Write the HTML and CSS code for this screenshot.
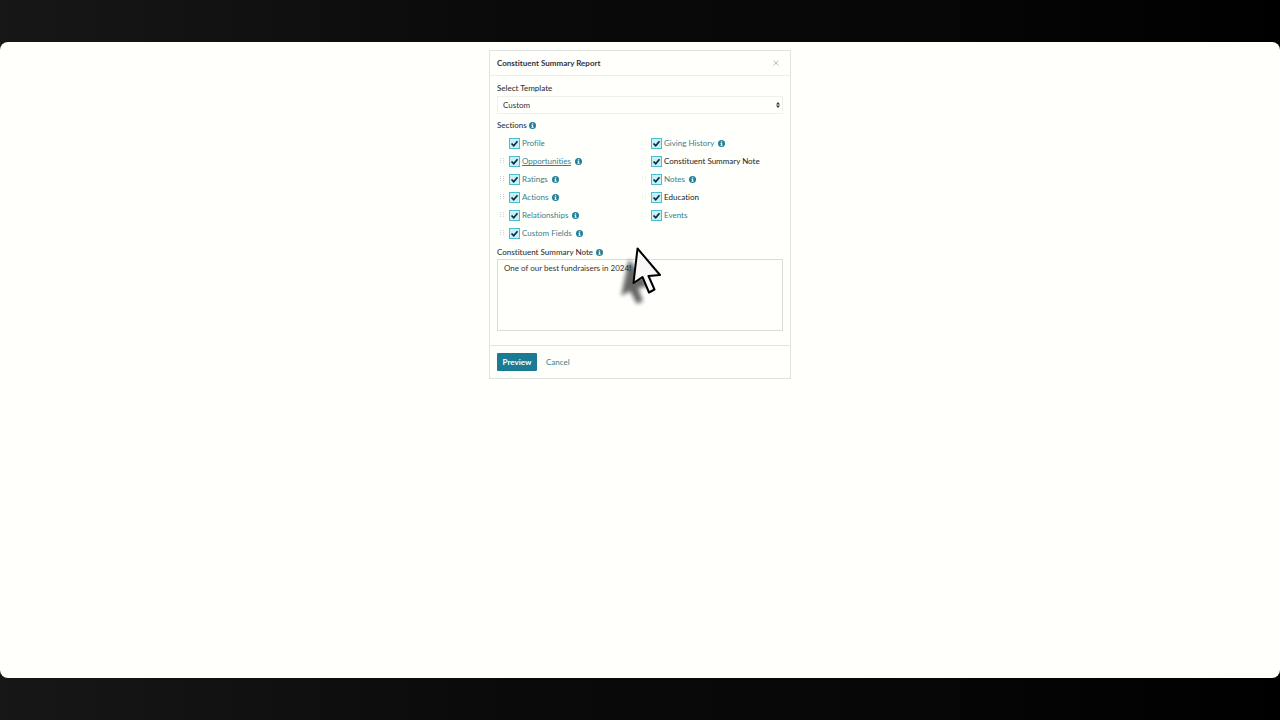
FILE: index.html
```html
<!DOCTYPE html>
<html lang="en">
<head>
	<meta charset="utf-8">
	<title>Constituent Summary Report</title>
	<link rel="stylesheet" href="styles.css">
</head>
<body>
<svg class="defs" width="0" height="0" aria-hidden="true">
	<symbol id="info" viewBox="0 0 14 14">
		<circle cx="7" cy="7" r="7" fill="#217f96"/>
		<path d="M5.8 2.3h2.6v2H5.8zM5 5.6h3.4v4.2h1v1.7H4.8V9.8h1V7.3H5z" fill="#fff"/>
	</symbol>
	<symbol id="grip" viewBox="0 0 4 6">
		<path d="M0 0h1v1H0zM3 0h1v1H3zM0 2h1v1H0zM3 2h1v1H3zM0 4h1v1H0zM3 4h1v1H3z" fill="#cfd3d1"/>
	</symbol>
</svg>
<main class="page">
	<form class="modal">
		<header class="modal-header">
			<h1>Constituent Summary Report</h1>
			<button type="button" class="close" aria-label="Close">
				<svg viewBox="0 0 6 6"><path d="M.5.5l5 5M5.5.5l-5 5" stroke="#b9bcba" fill="none"/></svg>
			</button>
		</header>
		<div class="modal-body">
			<label class="label" for="template">Select Template</label>
			<div class="select">
				<select id="template"><option>Custom</option></select>
				<svg class="arrows" viewBox="0 0 4 6"><path d="M2 0l2 2.500H0zM2 6l2-2.500H0z" fill="#333"/></svg>
			</div>
			<div class="label sections-label">Sections <svg class="info"><use href="#info"/></svg></div>
			<div class="sections">
				<ul>
					<li><span class="grip"></span><input type="checkbox" id="profile" checked><label for="profile"><a href="#">Profile</a></label></li>
					<li><svg class="grip"><use href="#grip"/></svg><input type="checkbox" id="opportunities" checked><label for="opportunities"><a href="#" class="hover">Opportunities</a></label><svg class="info"><use href="#info"/></svg></li>
					<li><svg class="grip"><use href="#grip"/></svg><input type="checkbox" id="ratings" checked><label for="ratings"><a href="#">Ratings</a></label><svg class="info"><use href="#info"/></svg></li>
					<li><svg class="grip"><use href="#grip"/></svg><input type="checkbox" id="actions" checked><label for="actions"><a href="#">Actions</a></label><svg class="info"><use href="#info"/></svg></li>
					<li><svg class="grip"><use href="#grip"/></svg><input type="checkbox" id="relationships" checked><label for="relationships"><a href="#">Relationships</a></label><svg class="info"><use href="#info"/></svg></li>
					<li><svg class="grip"><use href="#grip"/></svg><input type="checkbox" id="custom-fields" checked><label for="custom-fields"><a href="#">Custom Fields</a></label><svg class="info"><use href="#info"/></svg></li>
				</ul>
				<ul class="faint">
					<li><svg class="grip"><use href="#grip"/></svg><input type="checkbox" id="giving" checked><label for="giving"><a href="#">Giving History</a></label><svg class="info"><use href="#info"/></svg></li>
					<li><svg class="grip"><use href="#grip"/></svg><input type="checkbox" id="summary-note" checked><label for="summary-note">Constituent Summary Note</label></li>
					<li><svg class="grip"><use href="#grip"/></svg><input type="checkbox" id="notes" checked><label for="notes"><a href="#">Notes</a></label><svg class="info"><use href="#info"/></svg></li>
					<li><svg class="grip"><use href="#grip"/></svg><input type="checkbox" id="education" checked><label for="education">Education</label></li>
					<li><svg class="grip"><use href="#grip"/></svg><input type="checkbox" id="events" checked><label for="events"><a href="#">Events</a></label></li>
				</ul>
			</div>
			<label class="label note-label" for="note">Constituent Summary Note <svg class="info"><use href="#info"/></svg></label>
			<textarea id="note">One of our best fundraisers in 2024!</textarea>
		</div>
		<footer class="modal-footer">
			<button type="submit" class="preview">Preview</button>
			<a href="#" class="cancel">Cancel</a>
		</footer>
		<svg class="cursor" viewBox="0 0 48 64" aria-hidden="true">
			<path class="cursor-shadow" d="M13 14L5 51l9-5 7 13 6-3-5-13 11-2z"/>
			<path d="M21.500 3.500L17.500 38l9-6 6.500 15.500 5.500-3-6-13.500 11.500-1z" fill="#f8f8f8" stroke="#000" stroke-width="2" stroke-linejoin="round"/>
		</svg>
	</form>
</main>
</body>
</html>
```
FILE: styles.css
```css
* { box-sizing: border-box; }

body {
	display: flex;
	min-height: 100vh;
	margin: 0;
	padding: 42px 0;
	background: linear-gradient(90deg, #171717, #0a0a0a 40%, #060606 75%, #000);
	color: #333;
	font: 8px/10px Lato, "Open Sans", sans-serif;
	font-variant-ligatures: none;
}
ul, h1 { margin: 0; padding: 0; list-style: none; }
a { color: #337f91; text-decoration: none; }
button, select, textarea { font: inherit; color: inherit; }
.defs { position: absolute; }

.page {
	flex: 1;
	padding: 8px;
	border-radius: 8px;
	background: #fffffc;
}

/* modal */
.modal {
	position: relative;
	max-width: 302px;
	margin: 0 auto;
	border: 1px solid #e0e2df;
}
.modal-header {
	display: flex;
	align-items: center;
	justify-content: space-between;
	height: 25px;
	padding: 0 11px 0 7px;
	border-bottom: 1px solid #eceeeb;
}
.modal-header h1 { font-size: 8px; font-weight: bold; }
.close {
	display: flex;
	padding: 0;
	border: 0;
	background: none;
}
.close svg { width: 6px; height: 6px; }
.modal-body { padding: 7px 7px 14px; }
.label {
	display: flex;
	align-items: center;
	gap: 3px;
	font-weight: 500;
}
.info { flex: none; width: 7px; height: 7px; }

.select { position: relative; margin-top: 3px; }
.select select {
	display: block;
	width: 100%;
	height: 18px;
	padding: 0 5px;
	border: 1px solid #eff0ed;
	background: none;
	appearance: none;
}
.arrows {
	position: absolute;
	top: 6px;
	right: 3px;
	width: 4px;
	height: 6px;
}

/* section list */
.sections-label { gap: 2px; margin-top: 6px; }
.sections {
	display: grid;
	grid-template-columns: 1fr 1fr;
	margin-top: 4px;
}
.sections li {
	display: flex;
	align-items: center;
	height: 18px;
}
.sections .grip {
	width: 4px;
	height: 6px;
	margin: 0 5px 0 3px;
}
.sections .faint .grip { margin-left: 2px; opacity: .4; }
.sections input {
	width: 11px;
	height: 11px;
	margin: 0 2px 0 0;
	border: 1px solid #50bccd;
	background: #c5f1f9 url("data:image/svg+xml,%3Csvg xmlns='http://www.w3.org/2000/svg' viewBox='0 0 9 9'%3E%3Cpath d='M1.500 4.500l2.200 2.200L7.500 2.300' fill='none' stroke='%23112a38' stroke-width='1.700'/%3E%3C/svg%3E") center / 9px 9px;
	appearance: none;
}
.sections .info { margin-left: 4px; }
.sections label { color: #222; }
.hover { text-decoration: underline; }

.note-label { gap: 3px; margin-top: 5px; }
textarea {
	display: block;
	width: 100%;
	height: 72px;
	margin-top: 2px;
	padding: 3px 6px;
	border: 1px solid #d9dcd9;
	background: none;
	resize: none;
}

.modal-footer {
	display: flex;
	align-items: center;
	gap: 9px;
	padding: 7px;
	border-top: 1px solid #e2e4e1;
}
.preview {
	width: 40px;
	height: 18px;
	padding: 0;
	border: 0;
	border-radius: 1px;
	background: #197c94;
	color: #fff;
	font-weight: bold;
}

/* pointer */
.cursor {
	position: absolute;
	top: 194px;
	left: 126px;
	width: 48px;
	height: 64px;
	pointer-events: none;
}
.cursor-shadow { fill: #000; opacity: .6; filter: blur(2px); }
```
